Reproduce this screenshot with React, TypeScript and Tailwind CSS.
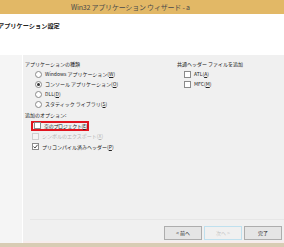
import React from 'react'

const font = "font-['Noto_Sans_CJK_JP','Noto_Sans',sans-serif]"

function Radio({ checked }: { checked?: boolean }) {
  return (
    <span className="w-[7px] h-[7px] rounded-full border border-[#8a8a8a] bg-white flex items-center justify-center mr-[3px]">
      {checked && <span className="w-[3px] h-[3px] rounded-full bg-[#333]" />}
    </span>
  )
}

function Check({ checked, disabled }: { checked?: boolean; disabled?: boolean }) {
  return (
    <span
      className={
        'w-[7px] h-[7px] border flex items-center justify-center mr-[3px] ' +
        (disabled ? 'border-[#cfcfcf] bg-[#f4f4f4]' : 'border-[#8a8a8a] bg-white')
      }
    >
      {checked && (
        <svg width="5" height="5" viewBox="0 0 5 5">
          <path d="M0.5 2.6 L2 4 L4.6 0.8" fill="none" stroke="#333" strokeWidth="0.9" />
        </svg>
      )}
    </span>
  )
}

export default function App() {
  return (
    <div className={`w-[284px] h-[247px] overflow-hidden flex flex-col bg-[#f0f0f0] text-[#222] ${font}`}>
      {/* title bar */}
      <div className="h-[14px] bg-[#e2b866] flex items-center pl-[71px] text-[7px] tracking-[-0.2px] text-[#4a4a4a] leading-none">
        Win32 アプリケーション ウィザード - a
      </div>

      {/* header */}
      <div className="h-[41px] bg-white pt-[9px]">
        <div className="-ml-[2px] text-[6.2px] font-bold leading-none">アプリケーション設定</div>
      </div>

      {/* body */}
      <div className="flex flex-1">
        <div className="w-[23px] bg-[#f5f5f5] border-r border-white" />
        <div className="flex-1 flex flex-col">
          <div className="flex flex-1 text-[5px] leading-[10px] pt-[4px]">
            <div className="w-[154px] pl-[2px] flex flex-col">
              <div className="h-[10px]">アプリケーションの種類</div>
              <div className="h-[10px] flex items-center pl-[10px]"><Radio />Windows アプリケーション(<u>W</u>)</div>
              <div className="h-[10px] flex items-center pl-[10px]"><Radio checked />コンソール アプリケーション(<u>O</u>)</div>
              <div className="h-[10px] flex items-center pl-[10px]"><Radio />DLL(<u>D</u>)</div>
              <div className="h-[10px] flex items-center pl-[10px]"><Radio />スタティック ライブラリ(<u>S</u>)</div>
              <div className="h-[11px] flex items-end">追加のオプション:</div>
              <div className="h-[11px] flex items-center pl-[6px]">
                <div className="h-[10px] flex items-center border-2 border-[#e0141e] pl-[1px] tracking-[-0.3px]">
                  <Check />空のプロジェクト(<u>E</u>)
                </div>
              </div>
              <div className="h-[10px] flex items-center pl-[7px] text-[#b5b5b5]"><Check disabled />シンボルのエクスポート(<u>X</u>)</div>
              <div className="h-[11px] flex items-center pl-[7px]"><Check checked />プリコンパイル済みヘッダー(<u>P</u>)</div>
            </div>
            <div className="flex flex-col">
              <div className="h-[10px]">共通ヘッダー ファイルを追加</div>
              <div className="h-[10px] flex items-center pl-[7px]"><Check />ATL(<u>A</u>)</div>
              <div className="h-[10px] flex items-center pl-[7px]"><Check />MFC(<u>M</u>)</div>
            </div>
          </div>

          <div className="h-[1px] bg-[#fbfbfb] ml-[7px] border-t border-[#e6e6e6]" />
          <div className="h-[21px] flex items-start justify-end pt-[6px] pr-[2px] gap-[2px] text-[5px]">
            <div className="w-[38px] h-[14px] border border-[#adadad] bg-[#e5e5e5] flex items-center justify-center">&lt; 前へ</div>
            <div className="w-[38px] h-[14px] border border-[#bfe0ee] bg-[#f0f0f0] text-[#c4c4c4] flex items-center justify-center">次へ &gt;</div>
            <div className="w-[38px] h-[14px] border border-[#adadad] bg-[#e5e5e5] flex items-center justify-center">完了</div>
          </div>
          <div className="h-[2px] bg-[#f7ecec]" />
        </div>
      </div>
      <div className="h-[4px] bg-[#d8ccb4]" />
    </div>
  )
}
